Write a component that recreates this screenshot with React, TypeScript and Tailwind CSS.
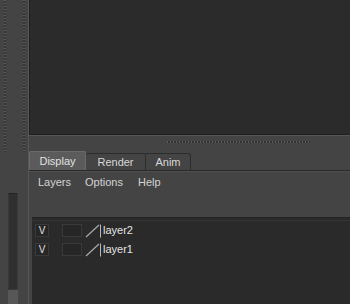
import React from "react";

function Row({ name }: { name: string }) {
  return (
    <div className="flex items-center h-[19px] pl-[3px]">
      <div className="w-[14px] h-[13px] bg-[#262626] border border-[#3a3a3a] flex items-center justify-center text-[10px] text-[#e0e0e0] leading-none">
        V
      </div>
      <div className="ml-[13px] w-[20px] h-[13px] bg-[#262626] border border-[#3a3a3a]" />
      <svg className="ml-[3px]" width="17" height="14" viewBox="0 0 17 14">
        <line x1="1" y1="13" x2="14" y2="1" stroke="#a8a8a8" strokeWidth="1.2" />
        <line x1="15.5" y1="0.5" x2="15.5" y2="13.5" stroke="#b8b8b8" strokeWidth="1" />
      </svg>
      <span className="ml-[1px] text-[#e4e4e4] text-[11px] leading-none">{name}</span>
    </div>
  );
}

export default function App() {
  return (
    <div className="w-[350px] h-[304px] bg-[#444444] flex overflow-hidden font-['Liberation_Sans',sans-serif] text-[11px]">
      {/* left strip */}
      <div className="w-[28px] h-full flex flex-col shrink-0">
        <div className="h-[152px] flex">
          <div className="ml-[4px] w-[2px] h-full bg-[repeating-linear-gradient(to_bottom,#5a5a5a_0_1px,#363636_1px_3px)]" />
          <div className="ml-[17px] w-[2px] h-full bg-[repeating-linear-gradient(to_bottom,#5a5a5a_0_1px,#363636_1px_3px)]" />
        </div>
        <div className="mt-auto ml-[8px] w-[10px] flex flex-col">
          <div className="h-[97px] bg-[#2f2f2f] border border-[#393939] border-t-[#252525]" />
          <div className="h-[14px] bg-[#575757]" />
        </div>
      </div>
      {/* main */}
      <div className="flex-1 flex flex-col border-l border-[#575757]">
        <div className="h-[135px] bg-[#2b2b2b] border-l border-b border-[#1f1f1f] shrink-0" />
        <div className="h-px bg-[#555555]" />
        <div className="h-[15px] flex items-start pt-[5px] shrink-0">
          <div className="ml-[138px] w-[143px] h-[2px] bg-[repeating-linear-gradient(to_right,#5e5e5e_0_1px,#333333_1px_3px)]" />
        </div>
        {/* tabs */}
        <div className="h-[19px] flex items-end shrink-0">
          <div className="w-[57px] h-[19px] pt-[1px] bg-[#5b5b5b] border-t border-x border-[#6a6a6a] rounded-t-[2px] flex items-center justify-center text-[#e2e2e2]">
            Display
          </div>
          <div className="w-[60px] h-[17px] pt-[1px] bg-[#444444] border-t border-r border-[#2c2c2c] rounded-t-[2px] flex items-center justify-center text-[#d8d8d8]">
            Render
          </div>
          <div className="w-[45px] h-[17px] pt-[1px] bg-[#444444] border-t border-r border-[#2c2c2c] rounded-tr-[3px] flex items-center justify-center text-[#d8d8d8]">
            Anim
          </div>
        </div>
        <div className="h-px bg-[#2a2a2a]" />
        <div className="h-px bg-[#4e4e4e]" />
        {/* menu */}
        <div className="h-[20px] flex items-center text-[#d4d4d4] shrink-0">
          <span className="ml-[9px]">Layers</span>
          <span className="ml-[14px]">Options</span>
          <span className="ml-[15px]">Help</span>
        </div>
        <div className="h-[25px] shrink-0" />
        {/* layer list */}
        <div className="flex-1 ml-[3px] bg-[#2a2a2a] border-t border-[#232323] flex flex-col">
          <div className="h-px bg-[#333333] mt-[2px]" />
          <div>
            <Row name="layer2" />
            <Row name="layer1" />
          </div>
        </div>
      </div>
    </div>
  );
}
